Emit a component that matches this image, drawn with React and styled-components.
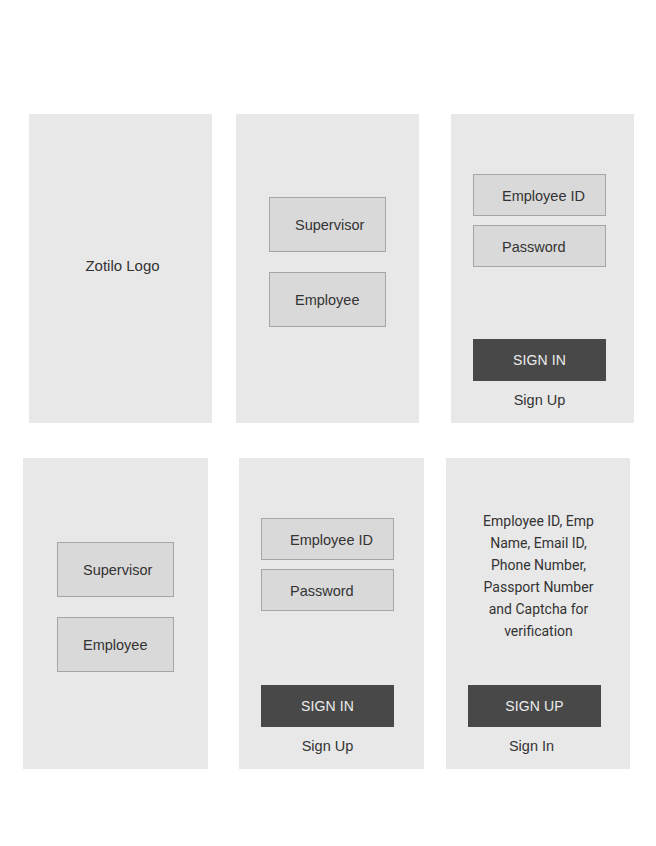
import React from "react";
import styled, { createGlobalStyle } from "styled-components";

const GlobalStyle = createGlobalStyle`
  html, body { margin: 0; padding: 0; background: #ffffff; }
  body { font-family: "Liberation Sans", Arial, sans-serif; color: #333333; }
  * { box-sizing: border-box; }
`;

const Page = styled.div`
  width: 656px;
  height: 846px;
  padding-top: 114px;
  display: flex;
  flex-direction: column;
  gap: 35px;
`;

const Row = styled.div`
  display: flex;
  align-items: flex-start;
`;

const Panel = styled.div`
  width: ${(p) => p.$w}px;
  height: ${(p) => p.$h}px;
  margin-left: ${(p) => p.$ml}px;
  background: #e8e8e8;
  display: flex;
  flex-direction: column;
  padding-top: ${(p) => p.$pt || 0}px;
  padding-bottom: 14px;
`;

const LogoText = styled.div`
  margin: auto;
  transform: translate(2px, 4px);
  font-size: 15px;
  color: #333;
`;

const ChoiceStack = styled.div`
  display: flex;
  flex-direction: column;
  align-items: center;
  gap: 20px;
`;

const ChoiceButton = styled.div`
  width: 117px;
  height: 55px;
  background: #d9d9d9;
  border: 1px solid #a5a5a5;
  display: flex;
  align-items: center;
  padding-left: 25px;
  font-size: 14.5px;
  color: #333;
`;

const FieldStack = styled.div`
  display: flex;
  flex-direction: column;
  gap: 9px;
  padding-left: 22px;
`;

const Field = styled.div`
  width: 133px;
  height: 42px;
  background: #d9d9d9;
  border: 1px solid #a5a5a5;
  display: flex;
  align-items: center;
  padding-left: 28px;
  padding-top: 1px;
  font-size: 14.5px;
  color: #333;
`;

const Footer = styled.div`
  margin-top: auto;
  padding-left: 22px;
  display: flex;
  flex-direction: column;
  align-items: flex-start;
`;

const PrimaryButton = styled.div`
  width: 133px;
  height: 42px;
  background: #484848;
  color: #ececec;
  display: flex;
  align-items: center;
  justify-content: center;
  font-size: 14px;
  letter-spacing: 0.1px;
`;

const LinkText = styled.div`
  width: 133px;
  margin-top: 10px;
  padding-right: ${(p) => p.$inset || 0}px;
  text-align: center;
  line-height: 18px;
  font-size: 14.5px;
  color: #333;
`;

const Description = styled.div`
  text-align: center;
  font-family: Roboto, "Liberation Sans", sans-serif;
  font-size: 14px;
  line-height: 22px;
  color: #333;
  padding-left: 1px;
`;

const LoginPanel = ({ ml, w, h, linkLabel }) => (
  <Panel $ml={ml} $w={w} $h={h} $pt={60}>
    <FieldStack>
      <Field>Employee ID</Field>
      <Field>Password</Field>
    </FieldStack>
    <Footer>
      <PrimaryButton>SIGN IN</PrimaryButton>
      <LinkText>{linkLabel}</LinkText>
    </Footer>
  </Panel>
);

const ChoicePanel = ({ ml, w, h, pt }) => (
  <Panel $ml={ml} $w={w} $h={h} $pt={pt}>
    <ChoiceStack>
      <ChoiceButton>Supervisor</ChoiceButton>
      <ChoiceButton>Employee</ChoiceButton>
    </ChoiceStack>
  </Panel>
);

export default function App() {
  return (
    <>
      <GlobalStyle />
      <Page>
        <Row>
          <Panel $ml={29} $w={183} $h={309}>
            <LogoText>Zotilo Logo</LogoText>
          </Panel>
          <ChoicePanel ml={24} w={183} h={309} pt={83} />
          <LoginPanel ml={32} w={183} h={309} linkLabel="Sign Up" />
        </Row>
        <Row>
          <ChoicePanel ml={23} w={185} h={311} pt={84} />
          <LoginPanel ml={31} w={185} h={311} linkLabel="Sign Up" />
          <Panel $ml={22} $w={184} $h={311} $pt={52}>
            <Description>
              Employee ID, Emp
              <br />
              Name, Email ID,
              <br />
              Phone Number,
              <br />
              Passport Number
              <br />
              and Captcha for
              <br />
              verification
            </Description>
            <Footer>
              <PrimaryButton>SIGN UP</PrimaryButton>
              <LinkText $inset={6}>Sign In</LinkText>
            </Footer>
          </Panel>
        </Row>
      </Page>
    </>
  );
}
